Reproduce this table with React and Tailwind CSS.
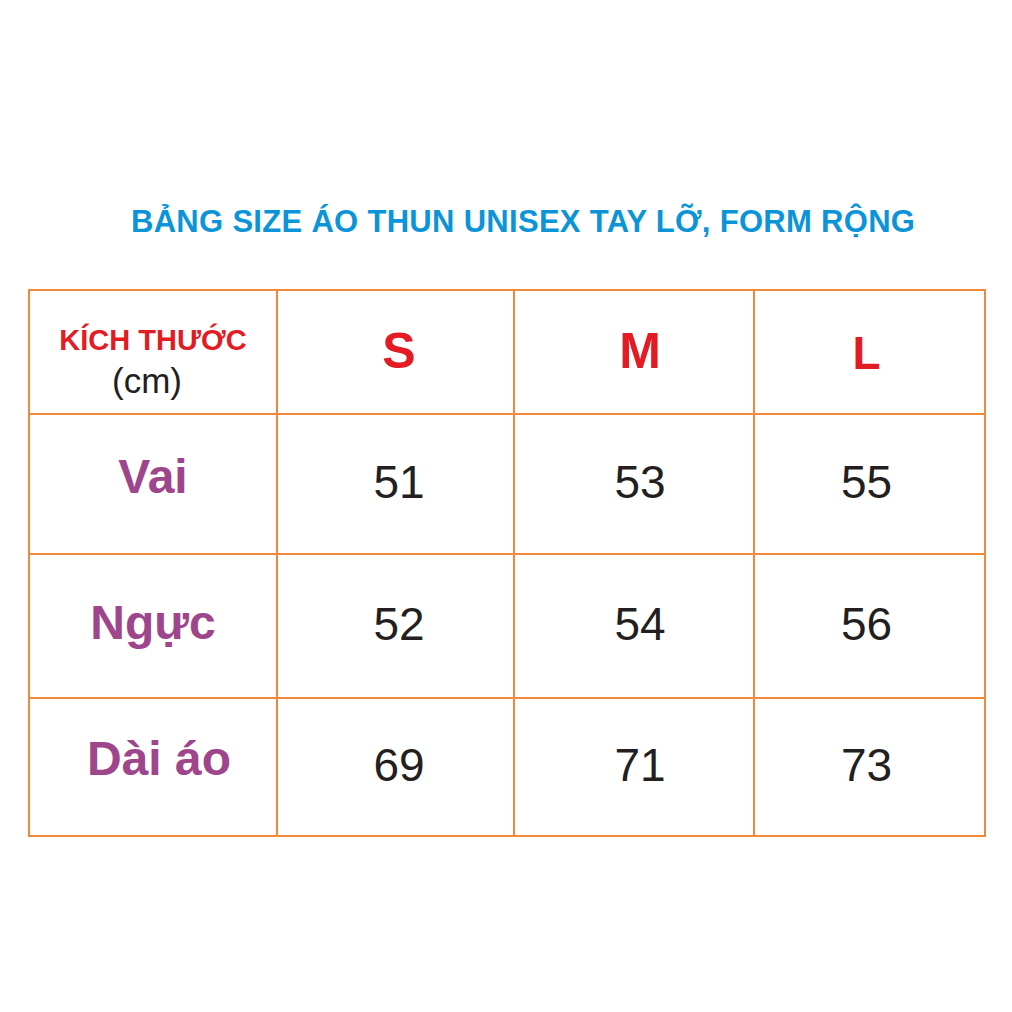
import React from "react";

const sizes = ["S", "M", "L"];

const rows = [
  { label: "Vai", values: ["51", "53", "55"], lift: "mb-[14px]" },
  { label: "Ngực", values: ["52", "54", "56"], lift: "mb-[7px]" },
  { label: "Dài áo", values: ["69", "71", "73"], lift: "mb-[17px] ml-[12px]" },
];

// nudges so each column's text sits where the original does
const colShift = ["pl-[7px]", "pl-[12px]", "pr-[6px]"];

function App() {
  return (
    <div
      className="w-[1012px] h-[1012px] bg-white pt-[206px]"
      style={{ fontFamily: '"Liberation Sans", Arial, sans-serif' }}
    >
      <h1 className="pl-[131px] text-[31px] leading-none font-bold tracking-[0.3px] text-[#0b94d7] h-[31px] whitespace-nowrap">
        BẢNG SIZE ÁO THUN UNISEX TAY LỠ, FORM RỘNG
      </h1>

      {/* size table */}
      <div className="ml-[28px] mt-[52px] w-[958px] grid grid-cols-[248px_237px_240px_231px] grid-rows-[124px_140px_144px_138px] border-l-2 border-t-2 border-[#f2893a]">
        <div className="border-r-2 border-b-2 border-[#f2893a] flex flex-col items-center pt-[35px]">
          <span className="text-[29px] leading-none font-bold text-[#e31b23] whitespace-nowrap">KÍCH THƯỚC</span>
          <span className="mt-[8px] mr-[12px] text-[35px] leading-none text-[#231f20]">(cm)</span>
        </div>
        {sizes.map((s, i) => (
          <div
            key={s}
            className={`border-r-2 border-b-2 border-[#f2893a] flex justify-center ${colShift[i]} ${s === "L" ? "pt-[39px]" : "pt-[35px]"}`}
          >
            <span className={`${s === "L" ? "text-[46px]" : "text-[50px]"} leading-none font-bold text-[#e31b23]`}>{s}</span>
          </div>
        ))}

        {rows.map((r) => (
          <React.Fragment key={r.label}>
            <div className="border-r-2 border-b-2 border-[#f2893a] flex items-center justify-center">
              <span className={`text-[48px] leading-none font-bold text-[#9e468b] whitespace-nowrap ${r.lift}`}>{r.label}</span>
            </div>
            {r.values.map((v, i) => (
              <div key={v} className={`border-r-2 border-b-2 border-[#f2893a] flex items-center justify-center ${colShift[i]}`}>
                <span className="text-[46px] leading-none text-[#231f20] mb-[5px]">{v}</span>
              </div>
            ))}
          </React.Fragment>
        ))}
      </div>
    </div>
  );
}

export default App;
